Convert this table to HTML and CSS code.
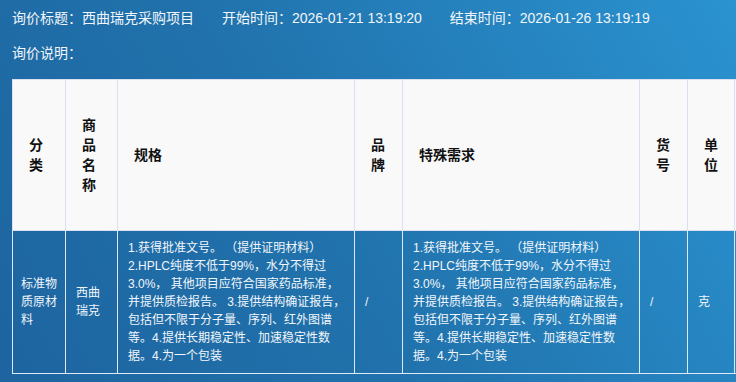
FILE: index.html
```html
<!DOCTYPE html>
<html lang="zh-CN">
<head>
    <meta charset="UTF-8">
    <meta name="viewport" content="width=device-width, initial-scale=1.0">
    <title>询价详情</title>
    <link rel="stylesheet" href="styles.css">
</head>
<body>
    <div class="page">
        <div class="info-row">
            <span class="info-item">询价标题：西曲瑞克采购项目</span>
            <span class="info-item">开始时间：2026-01-21 13:19:20</span>
            <span class="info-item">结束时间：2026-01-26 13:19:19</span>
        </div>
        <div class="info-row">
            <span class="info-item">询价说明：</span>
        </div>

        <!-- 询价商品明细 -->
        <table class="goods-table">
            <colgroup>
                <col class="col-type">
                <col class="col-name">
                <col class="col-spec">
                <col class="col-brand">
                <col class="col-spec">
                <col class="col-code">
                <col class="col-unit">
                <col class="col-more">
            </colgroup>
            <thead>
                <tr>
                    <th>分类</th>
                    <th>商品名称</th>
                    <th>规格</th>
                    <th>品牌</th>
                    <th>特殊需求</th>
                    <th>货号</th>
                    <th>单位</th>
                    <th></th>
                </tr>
            </thead>
            <tbody>
                <tr>
                    <td class="cell-type">标准物质原材料</td>
                    <td>西曲瑞克</td>
                    <td class="cell-text">1.获得批准文号。 （提供证明材料）<br>2.HPLC纯度不低于99%，水分不得过3.0%， 其他项目应符合国家药品标准，并提供质检报告。 3.提供结构确证报告，包括但不限于分子量、序列、红外图谱等。4.提供长期稳定性、加速稳定性数据。4.为一个包装</td>
                    <td>/</td>
                    <td class="cell-text">1.获得批准文号。 （提供证明材料）<br>2.HPLC纯度不低于99%，水分不得过3.0%， 其他项目应符合国家药品标准，并提供质检报告。 3.提供结构确证报告，包括但不限于分子量、序列、红外图谱等。4.提供长期稳定性、加速稳定性数据。4.为一个包装</td>
                    <td>/</td>
                    <td>克</td>
                    <td></td>
                </tr>
            </tbody>
        </table>
    </div>
</body>
</html>
```

FILE: styles.css
```css
html, body {
    margin: 0;
    padding: 0;
    height: 100%;
    overflow: hidden;
}

body {
    font-family: "Liberation Sans", "Noto Sans CJK SC", sans-serif;
    background: linear-gradient(60deg, #1d64a0 0%, #2173ad 45%, #2a93d0 100%);
    color: #f2f6fa;
}

.page {
    padding: 1px 0 0 12px;
}

.info-row {
    height: 35px;
    line-height: 35px;
    font-size: 14px;
    white-space: nowrap;
}

.info-item {
    margin-right: 24px;
}

.goods-table {
    margin-top: 8px;
    border-collapse: collapse;
    table-layout: fixed;
    width: 786px;
}

.col-type { width: 53px; }
.col-name { width: 52px; }
.col-spec { width: 237px; }
.col-brand { width: 48px; }
.col-code { width: 48px; }
.col-unit { width: 47px; }
.col-more { width: 64px; }

.goods-table th {
    height: 150px;
    padding: 0 16px;
    background-color: #f9f9fa;
    border: 1px solid #dcdff0;
    color: #111;
    font-size: 14px;
    font-weight: bold;
    line-height: 20px;
    text-align: left;
    vertical-align: middle;
}

.goods-table td {
    height: 142px;
    padding: 0 10px;
    border: 1px solid #dde9f5;
    font-size: 12px;
    line-height: 18px;
    text-align: left;
    vertical-align: middle;
}

.goods-table td.cell-type {
    padding: 0 8px;
}

.goods-table td.cell-text {
    padding: 0 8px 0 10px;
}
```
